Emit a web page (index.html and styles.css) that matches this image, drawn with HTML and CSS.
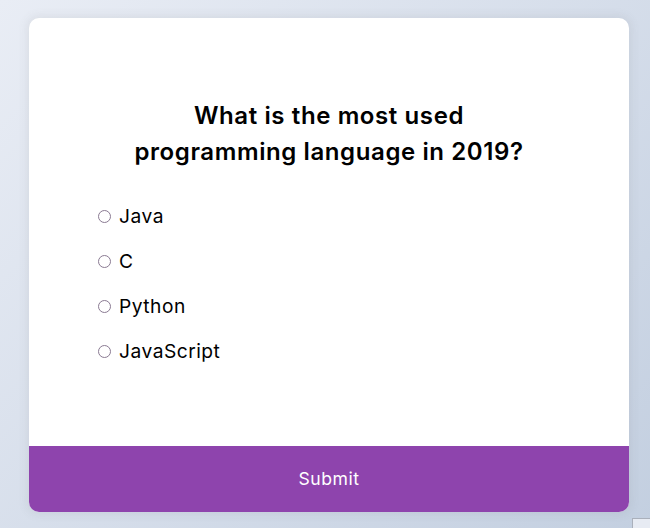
FILE: index.html
```html
<!DOCTYPE html>
<html lang="en">
<head>
<meta charset="UTF-8">
<title>Quiz</title>
<link rel="stylesheet" href="styles.css">
</head>
<body>
<div class="quiz-container">
  <div class="quiz-header">
    <h2 class="question">What is the most used<br>programming language in 2019?</h2>
    <ul class="answers">
      <li><input type="radio" name="answer" id="a"><label for="a">Java</label></li>
      <li><input type="radio" name="answer" id="b"><label for="b">C</label></li>
      <li><input type="radio" name="answer" id="c"><label for="c">Python</label></li>
      <li><input type="radio" name="answer" id="d"><label for="d">JavaScript</label></li>
    </ul>
  </div>
  <button class="submit">Submit</button>
</div>
<div class="corner-box"></div>
</body>
</html>
```
FILE: styles.css
```css
html, body {
  margin: 0;
  height: 100%;
}
body {
  box-sizing: border-box;
  padding: 2px 0 0 8px;
  background: linear-gradient(315deg, #c3cfe0 0%, #e9edf5 100%);
  font-family: Inter, "Open Sans", sans-serif;
  display: flex;
  align-items: center;
  justify-content: center;
  overflow: hidden;
}
.quiz-container {
  background: #fff;
  border-radius: 10px;
  box-shadow: 0 0 10px 2px rgba(100, 100, 100, 0.1);
  width: 600px;
  overflow: hidden;
}
.quiz-header {
  padding: 64px;
}
.question {
  margin: 0;
  padding: 16px;
  text-align: center;
  font-size: 24px;
  font-weight: 600;
  letter-spacing: 0.6px;
  line-height: 36px;
  color: #000;
}
.answers {
  list-style: none;
  margin: 15px 0 16px;
  padding: 0;
}
.answers li {
  font-size: 19.2px;
  line-height: 28.8px;
  letter-spacing: 0.5px;
  margin: 16px 0;
  color: #000;
}
.answers input {
  appearance: none;
  -webkit-appearance: none;
  box-sizing: border-box;
  margin: 3px 3px 0 5px;
  width: 13px;
  height: 13px;
  border: 1px solid #8a7a92;
  border-radius: 50%;
  background: #fff;
  vertical-align: baseline;
}
.answers label {
  margin-left: 5px;
}
.submit {
  display: block;
  width: 100%;
  border: none;
  background: #8e44ad;
  color: #fff;
  font-family: inherit;
  font-size: 17.6px;
  letter-spacing: 0.5px;
  line-height: 26px;
  padding: 20px;
  cursor: pointer;
}
.corner-box {
  position: fixed;
  left: 632px;
  top: 518px;
  width: 40px;
  height: 40px;
  background: #e7ebf3;
  border: 1px solid #aab0bb;
}
```
